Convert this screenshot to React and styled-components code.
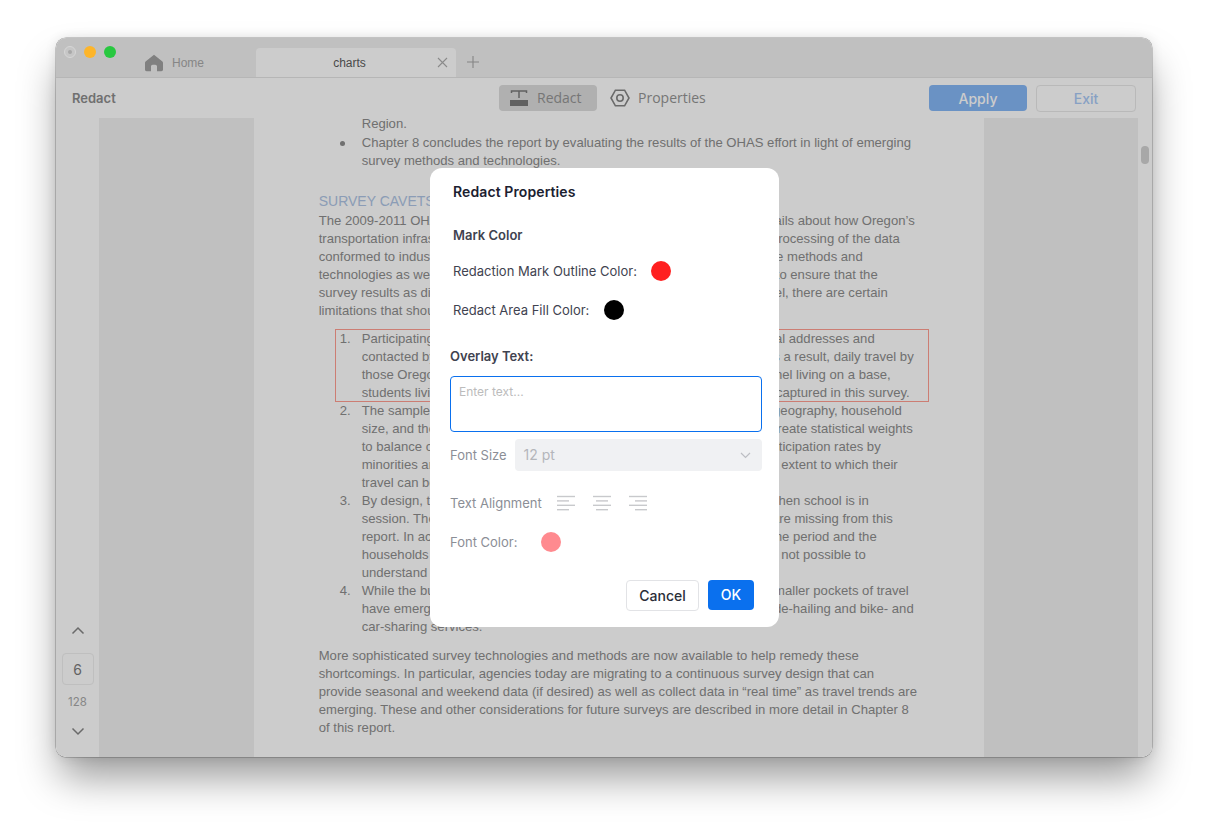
import React from 'react';
import styled, { createGlobalStyle } from 'styled-components';

const GlobalStyle = createGlobalStyle`
    html, body {
        margin: 0;
        padding: 0;
        background: #fff;
    }
    * {
        box-sizing: border-box;
    }
`;

const Page = styled.div`
    width: 1208px;
    height: 831px;
    padding: 38px 56px 74px;
    overflow: hidden;
    font-family: Inter, "Liberation Sans", sans-serif;
`;

const Window = styled.div`
    position: relative;
    width: 1096px;
    height: 719px;
    display: flex;
    flex-direction: column;
    border-radius: 10px;
    overflow: hidden;
    background: #fff;
    box-shadow: 0 0 0 0.5px rgba(0, 0, 0, 0.35), 0 24px 40px -4px rgba(0, 0, 0, 0.4), 0 0 12px rgba(0, 0, 0, 0.1);
`;

const Backdrop = styled.div`
    position: absolute;
    inset: 0;
    background: rgba(0, 0, 0, 0.2);
`;

const TitleBar = styled.div`
    height: 40px;
    flex: none;
    display: flex;
    align-items: flex-end;
    background: #f0f0f0;
    border-bottom: 1px solid #e4e4e4;
`;

const Lights = styled.div`
    position: relative;
    z-index: 1;
    width: 80px;
    height: 100%;
    padding: 8px 0 0 8px;
    display: flex;
    gap: 8px;
`;

const Light = styled.span`
    width: 12px;
    height: 12px;
    border-radius: 50%;
    background: ${(p) => p.$color};
    display: flex;
    align-items: center;
    justify-content: center;
`;

const Dot = styled.span`
    width: 4px;
    height: 4px;
    border-radius: 50%;
    background: #a8a8a8;
`;

const DisabledLight = styled(Light)`
    border: 1px solid #d6d6d6;
`;

const HomeTab = styled.div`
    width: 120px;
    height: 29px;
    display: flex;
    align-items: center;
    gap: 9px;
    padding-left: 9px;
    color: #a8a8a8;
    font-size: 12px;
    font-family: "Liberation Sans", sans-serif;
`;

const ActiveTab = styled.div`
    position: relative;
    width: 200px;
    height: 29px;
    display: flex;
    align-items: center;
    justify-content: center;
    padding-right: 13px;
    background: #fff;
    border-radius: 4px 4px 0 0;
    color: #5c5c5c;
    font-size: 12px;
    font-family: "Liberation Sans", sans-serif;
`;

const TabClose = styled.svg`
    position: absolute;
    right: 8px;
    top: 9px;
`;

const AddTab = styled.svg`
    margin: 0 0 9px 11px;
`;

const ToolBar = styled.div`
    height: 40px;
    flex: none;
    display: grid;
    grid-template-columns: 427px auto 1fr;
    align-items: center;
    background: #fff;
    padding: 0 16px;
`;

const ToolTitle = styled.div`
    font-size: 13px;
    font-weight: 600;
    color: #8c8c8c;
`;

const ToolCenter = styled.div`
    display: flex;
    align-items: center;
    gap: 13px;
`;

const ToolButton = styled.div`
    height: 26px;
    width: ${(p) => (p.$active ? '98px' : 'auto')};
    display: flex;
    align-items: center;
    gap: ${(p) => (p.$active ? '9px' : '8px')};
    padding-left: ${(p) => (p.$active ? '11px' : '0')};
    border-radius: 4px;
    background: ${(p) => (p.$active ? '#dcdcdc' : 'transparent')};
    color: #949494;
    font-size: 14px;
    font-family: "Open Sans", sans-serif;
`;

const ToolLabel = styled.span`
    margin-top: -2px;
`;

const ToolActions = styled.div`
    display: flex;
    justify-content: flex-end;
    align-items: center;
    gap: 9px;
`;

const ApplyButton = styled.div`
    width: 98px;
    height: 26px;
    display: flex;
    align-items: center;
    justify-content: center;
    border-radius: 4px;
    background: #85b7f6;
    color: #fff;
    font-size: 14px;
    font-weight: 500;
`;

const ExitButton = styled.div`
    width: 100px;
    height: 27px;
    display: flex;
    align-items: center;
    justify-content: center;
    border-radius: 4px;
    border: 1px solid #e8e8e8;
    color: #a9c9f5;
    font-size: 14px;
    font-weight: 500;
`;

const Body = styled.div`
    flex: 1;
    min-height: 0;
    display: flex;
`;

const Rail = styled.div`
    width: 43px;
    flex: none;
    display: flex;
    flex-direction: column;
    align-items: center;
    justify-content: flex-end;
    padding-bottom: 21px;
    background: #fff;
`;

const PageBox = styled.div`
    width: 32px;
    height: 32px;
    margin-top: 18px;
    display: flex;
    align-items: center;
    justify-content: center;
    border: 1px solid #efefef;
    border-radius: 4px;
    color: #7c7c7c;
    font-size: 14px;
`;

const PageCount = styled.div`
    margin: 10px 0 18px;
    color: #a8a8a8;
    font-size: 11.5px;
`;

const Gutter = styled.div`
    width: ${(p) => p.$width}px;
    flex: none;
    background: #f0f0f0;
`;

const Paper = styled.div`
    position: relative;
    width: 730px;
    flex: none;
    background: #fff;
    color: #8c8c8c;
    font-family: "Liberation Sans", sans-serif;
    font-size: 13.1px;
    line-height: 18px;
`;

const Sheet = styled.div`
    margin-left: 64.7px;
`;

const Line = styled.div`
    display: flex;
    justify-content: space-between;
    white-space: nowrap;
    width: ${(p) => (p.$width ? `${p.$width}px` : 'auto')};
`;

const ScrolledLine = styled(Line)`
    line-height: 12px;
    margin-bottom: 4px;
`;

const ListBlock = styled.div`
    margin-left: 43px;
`;

const Item = styled.div`
    position: relative;
`;

const Marker = styled.span`
    position: absolute;
    left: -22px;
    top: 0;
`;

const Bullet = styled.span`
    position: absolute;
    left: -22px;
    top: 7px;
    width: 5px;
    height: 5px;
    border-radius: 50%;
    background: #8c8c8c;
`;

const Heading = styled.div`
    margin-top: 22px;
    color: #aec4e4;
    font-size: 14px;
    line-height: 18px;
`;

const Spaced = styled.div`
    margin-top: ${(p) => p.$top}px;
`;

const RedactBox = styled.div`
    position: absolute;
    left: 81px;
    top: 211px;
    width: 594px;
    height: 73px;
    border: 1px solid #ff9d90;
`;

const Track = styled.div`
    flex: 1;
    padding: 28px 3px 0;
    background: #fff;
`;

const Thumb = styled.div`
    width: 8px;
    height: 18px;
    border-radius: 4px;
    background: #d2d2d2;
`;

const Modal = styled.div`
    position: absolute;
    left: 374px;
    top: 130px;
    width: 349px;
    height: 459px;
    padding: 16px 17px 0 20px;
    background: #fff;
    border-radius: 12px;
    color: #3f4350;
    font-size: 13px;
    line-height: 16px;
`;

const ModalTitle = styled.div`
    padding-left: 3px;
    font-size: 14px;
    font-weight: 600;
    color: #1b2130;
    letter-spacing: 0.1px;
`;

const MarkTitle = styled.div`
    margin: 27px 0 0 3px;
    font-weight: 600;
`;

const ColorRow = styled.div`
    display: flex;
    align-items: center;
    gap: ${(p) => p.$gap || 15}px;
    height: 20px;
    margin-top: ${(p) => p.$top}px;
    padding-left: ${(p) => p.$indent || 0}px;
    color: ${(p) => p.$color || 'inherit'};
`;

const Swatch = styled.span`
    width: 20px;
    height: 20px;
    border-radius: 50%;
    background: ${(p) => p.$color};
`;

const OverlayTitle = styled.div`
    margin-top: 28px;
    font-weight: 600;
`;

const TextBox = styled.div`
    width: 312px;
    height: 56px;
    margin-top: 12px;
    padding: 7px 8px;
    border: 1px solid #0a70ee;
    border-radius: 4px;
    color: #bcbcbc;
    font-size: 12px;
`;

const FieldRow = styled.div`
    display: flex;
    align-items: center;
    gap: 8px;
    margin-top: ${(p) => p.$top}px;
    color: #8b8e96;
    white-space: nowrap;
`;

const SelectBox = styled.div`
    width: 247px;
    height: 32px;
    display: flex;
    align-items: center;
    justify-content: space-between;
    padding: 0 11px 0 9px;
    border-radius: 4px;
    background: #f0f1f3;
    color: #b4b6bb;
    font-size: 14px;
`;

const AlignGroup = styled.div`
    display: flex;
    gap: 18px;
    margin-left: 7px;
`;

const Footer = styled.div`
    display: flex;
    justify-content: flex-end;
    align-items: flex-start;
    gap: 9px;
    margin: 28px 8px 0 0;
`;

const CancelButton = styled.div`
    width: 73px;
    height: 31px;
    display: flex;
    align-items: center;
    justify-content: center;
    border: 1px solid #e2e3e6;
    border-radius: 4px;
    color: #2a2e38;
    font-size: 14px;
    font-weight: 500;
`;

const OkButton = styled.div`
    width: 46px;
    height: 30px;
    display: flex;
    align-items: center;
    justify-content: center;
    border-radius: 4px;
    background: #0a70ee;
    color: #fff;
    font-size: 14px;
    font-weight: 500;
`;

const introLines = [
    { w: 596, a: 'The 2009-2011 OHAS', b: 'details about how Oregon\u2019s' },
    { w: 581, a: 'transportation infrastructure', b: 'processing of the data' },
    { w: 544, a: 'conformed to industry', b: 'the methods and' },
    { w: 559, a: 'technologies as well', b: 'to ensure that the' },
    { w: 569, a: 'survey results as directed', b: 'level, there are certain' },
    { w: 0, a: 'limitations that should be', b: '' },
];

const listItems = [
    {
        n: '1.',
        lines: [
            { w: 513, a: 'Participating households', b: 'physical addresses and' },
            { w: 552, a: 'contacted by', b: 'As a result, daily travel by' },
            { w: 529, a: 'those Oregon', b: 'personnel living on a base,' },
            { w: 548, a: 'students living', b: 'not captured in this survey.' },
        ],
    },
    {
        n: '2.',
        lines: [
            { w: 540, a: 'The sample', b: 'geography, household' },
            { w: 551, a: 'size, and the', b: 'to create statistical weights' },
            { w: 519, a: 'to balance certain', b: 'participation rates by' },
            { w: 536, a: 'minorities and', b: 'the extent to which their' },
            { w: 0, a: 'travel can be', b: '' },
        ],
    },
    {
        n: '3.',
        lines: [
            { w: 507, a: 'By design, the', b: 'when school is in' },
            { w: 531, a: 'session. The', b: 'are missing from this' },
            { w: 515, a: 'report. In accordance', b: 'same period and the' },
            { w: 504, a: 'households', b: 'not possible to' },
            { w: 0, a: 'understand', b: '' },
        ],
    },
    {
        n: '4.',
        lines: [
            { w: 547, a: 'While the bulk', b: 'smaller pockets of travel' },
            { w: 552, a: 'have emerged', b: 'ride-hailing and bike- and' },
            { w: 0, a: 'car-sharing services.', b: '' },
        ],
    },
];

const closingLines = [
    'More sophisticated survey technologies and methods are now available to help remedy these',
    'shortcomings. In particular, agencies today are migrating to a continuous survey design that can',
    'provide seasonal and weekend data (if desired) as well as collect data in \u201creal time\u201d as travel trends are',
    'emerging. These and other considerations for future surveys are described in more detail in Chapter 8',
    'of this report.',
];

const SplitLine = ({ line }) => (
    <Line $width={line.w}>
        <span>{line.a}</span>
        {line.b && <span>{line.b}</span>}
    </Line>
);

const AlignIcon = ({ kind }) => {
    const rows = {
        left: [[0, 18], [0, 12], [0, 18], [0, 12]],
        center: [[0, 18], [3, 15], [0, 18], [3, 15]],
        right: [[0, 18], [6, 18], [0, 18], [6, 18]],
    }[kind];

    return (
        <svg width="18" height="16" viewBox="0 0 18 16" fill="none" stroke="#c8c9cc" strokeWidth="1.4">
            {rows.map(([from, to], i) => (
                <path key={i} d={`M${from} ${1.5 + i * 4.4}H${to}`} />
            ))}
        </svg>
    );
};

const App = () => {
    return (
        <Page>
            <GlobalStyle />
            <Window>
                <TitleBar>
                    <Lights>
                        <DisabledLight $color="#c6c6c6"><Dot /></DisabledLight>
                        <Light $color="#fdb52a" />
                        <Light $color="#28c840" />
                    </Lights>
                    <HomeTab>
                        <svg width="18" height="18" viewBox="0 0 18 18" fill="#a0a0a0">
                            <path d="M9 0.8 0.6 7.6c-.5.4-.6.9-.6 1.4V15.5c0 1 .7 1.7 1.7 1.7H6V12.5c0-1 .8-1.7 1.7-1.7h2.6c.9 0 1.7.7 1.7 1.7v4.7h4.3c1 0 1.7-.7 1.7-1.7V9c0-.5-.1-1-.6-1.4L9 .8Z" />
                        </svg>
                        Home
                    </HomeTab>
                    <ActiveTab>
                        charts
                        <TabClose width="11" height="11" viewBox="0 0 11 11" stroke="#adadad" strokeWidth="1.1">
                            <path d="M1 1l9 9M10 1l-9 9" />
                        </TabClose>
                    </ActiveTab>
                    <AddTab width="12" height="12" viewBox="0 0 12 12" stroke="#a6a6a6" strokeWidth="1.1">
                        <path d="M6 0v12M0 6h12" />
                    </AddTab>
                </TitleBar>
                <ToolBar>
                    <ToolTitle>Redact</ToolTitle>
                    <ToolCenter>
                        <ToolButton $active>
                            <svg width="18" height="16" viewBox="0 0 18 16" fill="none">
                                <path d="M1.5 3V1H16.5V3M9 1V8" stroke="#7a7a7a" strokeWidth="1.5" />
                                <path d="M0 10H18V16H0Z" fill="#7a7a7a" />
                            </svg>
                            <ToolLabel>Redact</ToolLabel>
                        </ToolButton>
                        <ToolButton>
                            <svg width="20" height="20" viewBox="0 0 20 20" fill="none" stroke="#858585" strokeWidth="1.6">
                                <path d="M5.4 2.2H14.6L19 10L14.6 17.8H5.4L1 10Z" />
                                <circle cx="10" cy="10" r="3.2" />
                            </svg>
                            <ToolLabel>Properties</ToolLabel>
                        </ToolButton>
                    </ToolCenter>
                    <ToolActions>
                        <ApplyButton>Apply</ApplyButton>
                        <ExitButton>Exit</ExitButton>
                    </ToolActions>
                </ToolBar>
                <Body>
                    <Rail>
                        <svg width="14" height="9" viewBox="0 0 14 9" fill="none" stroke="#858585" strokeWidth="1.5">
                            <path d="M1.5 7.5 7 2l5.5 5.5" />
                        </svg>
                        <PageBox>6</PageBox>
                        <PageCount>128</PageCount>
                        <svg width="14" height="9" viewBox="0 0 14 9" fill="none" stroke="#858585" strokeWidth="1.5">
                            <path d="M1.5 1.5 7 7l5.5-5.5" />
                        </svg>
                    </Rail>
                    <Gutter $width={155} />
                    <Paper>
                        <Sheet>
                            <ListBlock>
                                <ScrolledLine>Region.</ScrolledLine>
                                <Item>
                                    <Bullet />
                                    <Line>Chapter 8 concludes the report by evaluating the results of the OHAS effort in light of emerging</Line>
                                    <Line>survey methods and technologies.</Line>
                                </Item>
                            </ListBlock>
                            <Heading>SURVEY CAVETS</Heading>
                            <Spaced $top={2}>
                                {introLines.map((line) => (
                                    <SplitLine key={line.a} line={line} />
                                ))}
                            </Spaced>
                            <Spaced $top={10}>
                                <ListBlock>
                                    {listItems.map((item) => (
                                        <Item key={item.n}>
                                            <Marker>{item.n}</Marker>
                                            {item.lines.map((line) => (
                                                <SplitLine key={line.a} line={line} />
                                            ))}
                                        </Item>
                                    ))}
                                </ListBlock>
                            </Spaced>
                            <Spaced $top={11}>
                                {closingLines.map((text) => (
                                    <Line key={text}>{text}</Line>
                                ))}
                            </Spaced>
                        </Sheet>
                        <RedactBox />
                    </Paper>
                    <Gutter $width={154} />
                    <Track>
                        <Thumb />
                    </Track>
                </Body>
                <Backdrop />
                <Modal>
                    <ModalTitle>Redact Properties</ModalTitle>
                    <MarkTitle>Mark Color</MarkTitle>
                    <ColorRow $top={18} $indent={3} $gap={14}>
                        Redaction Mark Outline Color:
                        <Swatch $color="#ff2020" />
                    </ColorRow>
                    <ColorRow $top={19} $indent={3}>
                        Redact Area Fill Color:
                        <Swatch $color="#000" />
                    </ColorRow>
                    <OverlayTitle>Overlay Text:</OverlayTitle>
                    <TextBox>Enter text...</TextBox>
                    <FieldRow $top={7}>
                        Font Size
                        <SelectBox>
                            12 pt
                            <svg width="11" height="7" viewBox="0 0 11 7" fill="none" stroke="#bcbec3" strokeWidth="1.2">
                                <path d="M1 1l4.5 4.5L10 1" />
                            </svg>
                        </SelectBox>
                    </FieldRow>
                    <FieldRow $top={24}>
                        Text Alignment
                        <AlignGroup>
                            <AlignIcon kind="left" />
                            <AlignIcon kind="center" />
                            <AlignIcon kind="right" />
                        </AlignGroup>
                    </FieldRow>
                    <ColorRow $top={21} $color="#8b8e96" $gap={24}>
                        Font Color:
                        <Swatch $color="#ff8a8f" />
                    </ColorRow>
                    <Footer>
                        <CancelButton>Cancel</CancelButton>
                        <OkButton>OK</OkButton>
                    </Footer>
                </Modal>
            </Window>
        </Page>
    );
};

export default App;
